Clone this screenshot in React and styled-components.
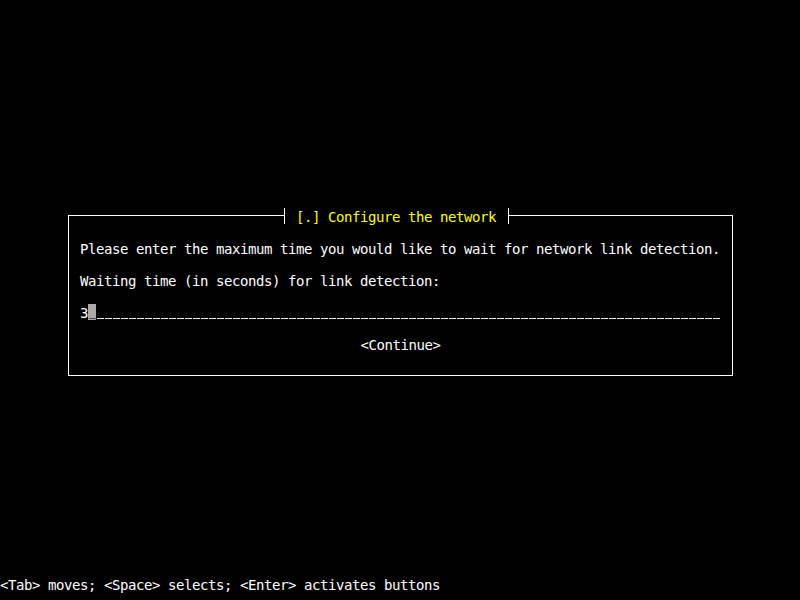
import React from "react";
import styled, { createGlobalStyle } from "styled-components";

const Global = createGlobalStyle`
  html, body { margin: 0; padding: 0; background: #000; }
  #root { background: #000; }
`;

const Screen = styled.div`
  width: 800px;
  height: 600px;
  background: #000;
  color: #fff;
  display: flex;
  flex-direction: column;
  font-family: "DejaVu Sans Mono", "Liberation Mono", monospace;
  font-size: 14px;
  letter-spacing: -0.4287px;
  overflow: hidden;
`;

const Dialog = styled.div`
  margin: 215px 0 0 68px;
  width: 665px;
  box-sizing: border-box;
  border: 1px solid #fff;
  border-top: none;
  display: flex;
  flex-direction: column;
`;

const TitleRow = styled.div`
  display: flex;
  height: 16px;
  margin-top: -7px;
`;

const Segment = styled.div`
  height: 1px;
  margin-top: 7px;
  background: #fff;
  ${(p) => (p.$width ? `width: ${p.$width}px; flex: none;` : `flex: 1;`)}
`;

const Tick = styled.div`
  width: 1px;
  height: 16px;
  background: #fff;
  flex: none;
`;

const Title = styled.div`
  color: #ffff00;
  padding: 0 12px 0 11px;
  height: 16px;
  line-height: 18px;
  white-space: pre;
`;

const Content = styled.div`
  display: flex;
  flex-direction: column;
  gap: 16px;
  padding: 16px 0 23px 0;
`;

const Line = styled.div`
  height: 16px;
  line-height: 18px;
  padding-left: 11px;
  white-space: pre;
`;

const InputRow = styled.div`
  display: flex;
  height: 16px;
  padding-left: 11px;
`;

const Value = styled.span`
  width: 8px;
  height: 16px;
  line-height: 18px;
  flex: none;
`;

const Cursor = styled.span`
  width: 8px;
  height: 16px;
  flex: none;
  background:
    linear-gradient(#4a4a4a, #4a4a4a) 1px 14px / 7px 1px no-repeat,
    #aaaaaa;
`;

const Field = styled.span`
  width: 624px;
  height: 16px;
  flex: none;
  background: repeating-linear-gradient(
      to right,
      transparent 0 1px,
      #fff 1px 8px
    )
    0 14px / 100% 1px no-repeat;
`;

const ButtonRow = styled.div`
  display: flex;
  justify-content: center;
  height: 16px;
`;

const Button = styled.span`
  height: 16px;
  line-height: 18px;
  white-space: pre;
`;

const Footer = styled.div`
  margin-top: auto;
  margin-bottom: 8px;
  height: 16px;
  line-height: 18px;
  white-space: pre;
`;

export default function App() {
  return (
    <>
      <Global />
      <Screen>
        <Dialog>
          <TitleRow>
            <Segment $width={215} />
            <Tick />
            <Title>[.] Configure the network</Title>
            <Tick />
            <Segment />
          </TitleRow>
          <Content>
            <Line>Please enter the maximum time you would like to wait for network link detection.</Line>
            <Line>Waiting time (in seconds) for link detection:</Line>
            <InputRow>
              <Value>3</Value>
              <Cursor />
              <Field />
            </InputRow>
            <ButtonRow>
              <Button>&lt;Continue&gt;</Button>
            </ButtonRow>
          </Content>
        </Dialog>
        <Footer>&lt;Tab&gt; moves; &lt;Space&gt; selects; &lt;Enter&gt; activates buttons</Footer>
      </Screen>
    </>
  );
}
